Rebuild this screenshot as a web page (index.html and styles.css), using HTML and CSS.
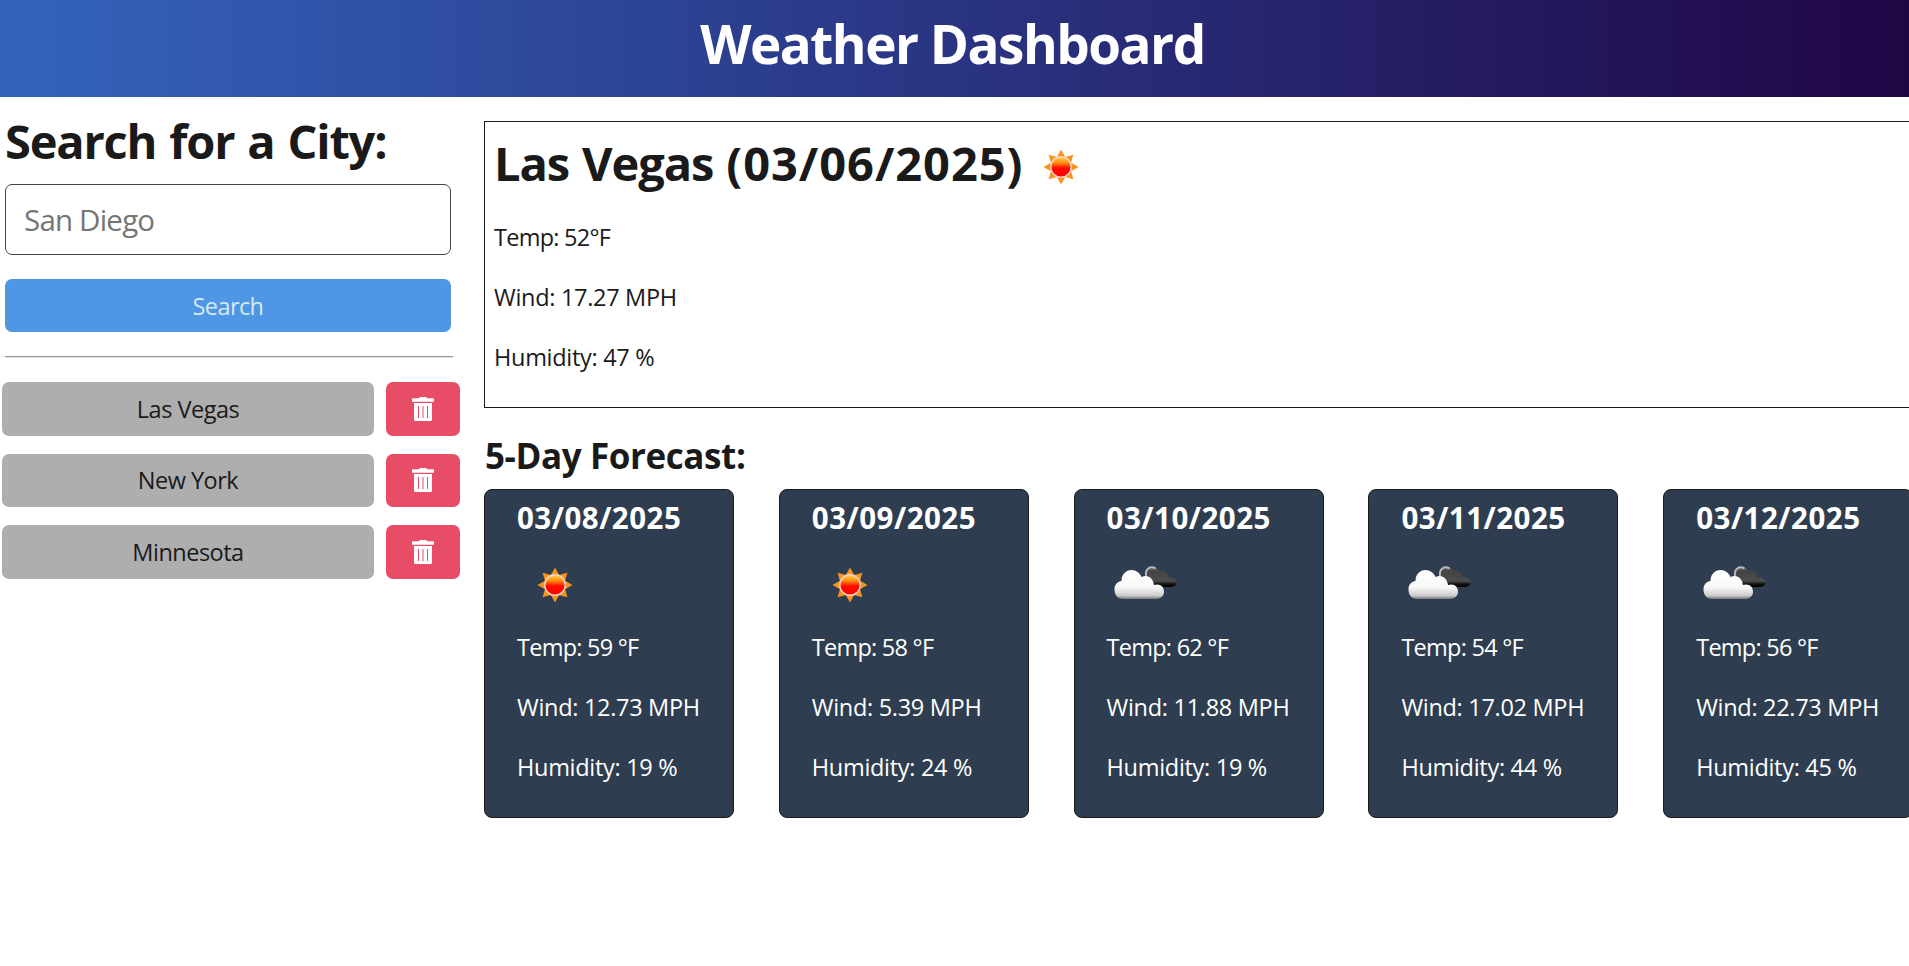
FILE: index.html
```html
<!DOCTYPE html>
<html lang="en">
<head>
<meta charset="utf-8">
<title>Weather Dashboard</title>
<link rel="stylesheet" href="styles.css">
</head>
<body>
<svg class="defs" aria-hidden="true">
  <defs>
    <linearGradient id="sun-core" x1="0" y1="0" x2="0" y2="1"><stop offset="0" stop-color="#ffd84a"/><stop offset=".3" stop-color="#ff8a10"/><stop offset=".55" stop-color="#ff0a00"/><stop offset="1" stop-color="#f00"/></linearGradient>
    <linearGradient id="cloud-front" x1="0" y1="0" x2="0" y2="1"><stop offset="0" stop-color="#fff"/><stop offset=".6" stop-color="#f8f8f8"/><stop offset=".88" stop-color="#ccc"/><stop offset="1" stop-color="#777"/></linearGradient>
    <linearGradient id="cloud-back" x1="0" y1="0" x2="0" y2="1"><stop offset="0" stop-color="#666"/><stop offset=".2" stop-color="#444"/><stop offset=".7" stop-color="#4c4c4c"/><stop offset=".85" stop-color="#111"/><stop offset="1" stop-color="#000"/></linearGradient>
    <symbol id="sun" viewBox="-38 -38 76 76">
      <g fill="#f7941d"><path id="ray" d="M-4.2-10L0-17.5L4.2-10Z"/><use href="#ray" transform="rotate(45)"/><use href="#ray" transform="rotate(90)"/><use href="#ray" transform="rotate(135)"/><use href="#ray" transform="rotate(180)"/><use href="#ray" transform="rotate(225)"/><use href="#ray" transform="rotate(270)"/><use href="#ray" transform="rotate(315)"/></g>
      <circle r="10.2" fill="url(#sun-core)" stroke="#f8d5cb" stroke-width="1.4"/>
    </symbol>
    <symbol id="clouds" viewBox="-1 -1 76 76">
      <path d="M38 32C36 24 40 19 45 19.500C49 19.500 50 21 51 23C57 22 60 25 60 29C66 29 69 32 68.500 35C68 38 65 39 62 39H42Z" fill="url(#cloud-back)"/>
      <path d="M38 28C37 21 42 17.500 47.500 20.500" fill="none" stroke="#bbb" stroke-width="2"/>
      <path d="M15 51C9 51 6.500 46 6.500 41.500C6.500 37 9 33.500 13.500 33C13.500 26 18 22 23.500 22C28 22 32 25 33.500 29C40 26 45 30 46 37C52 35 56.500 39 56 44.500C55.500 48.500 52 51 48 51Z" fill="url(#cloud-front)"/>
    </symbol>
    <symbol id="trash" viewBox="0 0 22 24">
      <path d="M1 1.200H7Q7.300 0 8.500 0H13.500Q14.700 0 15 1.200H21Q22 1.200 22 2.200V4.800H0V2.200Q0 1.200 1 1.200Z"/>
      <path fill-rule="evenodd" d="M2 6H20V22.500Q20 24 18.500 24H3.500Q2 24 2 22.500ZM6 9V21H7V9ZM10.500 9V21H11.500V9ZM15 9V21H16V9Z"/>
    </symbol>
  </defs>
</svg>
<header class="header"><h1 class="title">Weather Dashboard</h1></header>
<main class="layout">
  <aside class="sidebar">
    <form class="search">
      <h2 class="search-title">Search for a City:</h2>
      <input class="search-input" type="text" placeholder="San Diego">
      <button class="search-button" type="button">Search</button>
    </form>
    <hr class="divider">
    <ul class="history">
      <li class="history-row"><button class="city">Las Vegas</button><button class="delete" aria-label="Delete"><svg class="trash"><use href="#trash"/></svg></button></li>
      <li class="history-row"><button class="city">New York</button><button class="delete" aria-label="Delete"><svg class="trash"><use href="#trash"/></svg></button></li>
      <li class="history-row"><button class="city">Minnesota</button><button class="delete" aria-label="Delete"><svg class="trash"><use href="#trash"/></svg></button></li>
    </ul>
  </aside>
  <div class="content">
    <section class="today">
      <div class="today-head"><h2 class="today-title">Las Vegas <span class="today-date">(03/06/2025)</span></h2><svg class="icon"><use href="#sun"/></svg></div>
      <p class="line temp">Temp: 52°F</p>
      <p class="line">Wind: 17.27 MPH</p>
      <p class="line">Humidity: 47 %</p>
    </section>
    <h3 class="forecast-title">5-Day Forecast:</h3>
    <section class="forecast">
      <article class="card"><h4 class="date">03/08/2025</h4><svg class="icon"><use href="#sun"/></svg><p class="line temp">Temp: 59 °F</p><p class="line">Wind: 12.73 MPH</p><p class="line">Humidity: 19 %</p></article>
      <article class="card"><h4 class="date">03/09/2025</h4><svg class="icon"><use href="#sun"/></svg><p class="line temp">Temp: 58 °F</p><p class="line">Wind: 5.39 MPH</p><p class="line">Humidity: 24 %</p></article>
      <article class="card"><h4 class="date">03/10/2025</h4><svg class="icon"><use href="#clouds"/></svg><p class="line temp">Temp: 62 °F</p><p class="line">Wind: 11.88 MPH</p><p class="line">Humidity: 19 %</p></article>
      <article class="card"><h4 class="date">03/11/2025</h4><svg class="icon"><use href="#clouds"/></svg><p class="line temp">Temp: 54 °F</p><p class="line">Wind: 17.02 MPH</p><p class="line">Humidity: 44 %</p></article>
      <article class="card"><h4 class="date">03/12/2025</h4><svg class="icon"><use href="#clouds"/></svg><p class="line temp">Temp: 56 °F</p><p class="line">Wind: 22.73 MPH</p><p class="line">Humidity: 45 %</p></article>
    </section>
  </div>
</main>
</body>
</html>
```
FILE: styles.css
```css
* { box-sizing: border-box; }
body {
  margin: 0;
  overflow: hidden;
  background: #fff;
  color: #1a1a1a;
  font-family: "Segoe UI", "Open Sans", "Noto Sans", sans-serif;
  font-size: 23.5px;
}
h1, h2, h3, h4, p, ul { margin: 0; padding: 0; }
button, input { font: inherit; }
.defs { position: absolute; width: 0; height: 0; }
.header {
  height: 97px;
  padding: 8px 4px 0 0;
  background: linear-gradient(90deg, #3364bc, #2a3482 50%, #200645);
  color: #fff;
  text-align: center;
}
.title { font-size: 53px; line-height: 72px; letter-spacing: -1.5px; }
.layout { display: flex; }
.sidebar { flex: 0 0 484px; padding: 14px 0 0 2px; }
.search { display: flex; flex-direction: column; width: 449px; padding-left: 3px; }
.search-title { font-size: 47px; line-height: 60px; margin-bottom: 13px; letter-spacing: -1.2px; word-spacing: 2px; white-space: nowrap; }
.search-input {
  height: 71px;
  padding: 0 18px;
  border: 1px solid #444;
  border-radius: 7px;
  font-size: 29.5px;
  letter-spacing: -.8px;
}
.search-input::placeholder { color: #757575; opacity: 1; }
.search-button {
  height: 53px;
  margin-top: 24px;
  border: 0;
  border-radius: 7px;
  background: #4f96e5;
  color: #d6e9ee;
  letter-spacing: -.6px;
}
.divider { width: 448px; height: 2px; margin: 24px 0 24px 3px; border: 0; border-top: 1px solid #959595; border-bottom: 1px solid #e6e6e6; }
.history { display: flex; flex-direction: column; gap: 18px; list-style: none; }
.history-row { display: flex; gap: 12px; height: 53.500px; }
.city { width: 372px; border: 0; border-radius: 7px; background: #aeaeae; color: #1a1a1a; letter-spacing: -.5px; }
.delete { display: flex; align-items: center; justify-content: center; width: 74px; padding: 0; border: 0; border-radius: 7px; background: #e84d67; }
.trash { width: 22px; height: 24px; fill: #fff; }
.content { flex: 0 0 1430px; padding-top: 24px; }
.today { height: 287px; padding: 7px 0 0 9px; border: 1px solid #1a1a1a; }
.today-head { display: flex; height: 78px; }
.today-title { font-size: 47px; line-height: 68px; letter-spacing: -1.1px; word-spacing: 2px; white-space: nowrap; }
.today-date { letter-spacing: .95px; }
.icon { display: block; width: 76px; height: 76px; }
.line { height: 60px; line-height: 60px; letter-spacing: -.3px; white-space: nowrap; }
.temp { letter-spacing: -.75px; }
.forecast-title { height: 81px; padding: 23px 0 0 1px; font-size: 35px; line-height: 50px; letter-spacing: -.4px; }
.forecast { display: flex; gap: 44.800px; }
.card {
  flex: 0 0 250px;
  height: 329px;
  padding: 6px 0 0 32px;
  border: 1px solid #1a1a1a;
  border-radius: 8px;
  background: #2e3e50;
  color: #fff;
}
.card .icon { margin-bottom: -6px; }
.date { height: 51px; font-size: 29.500px; line-height: 44px; letter-spacing: .5px; }
```
